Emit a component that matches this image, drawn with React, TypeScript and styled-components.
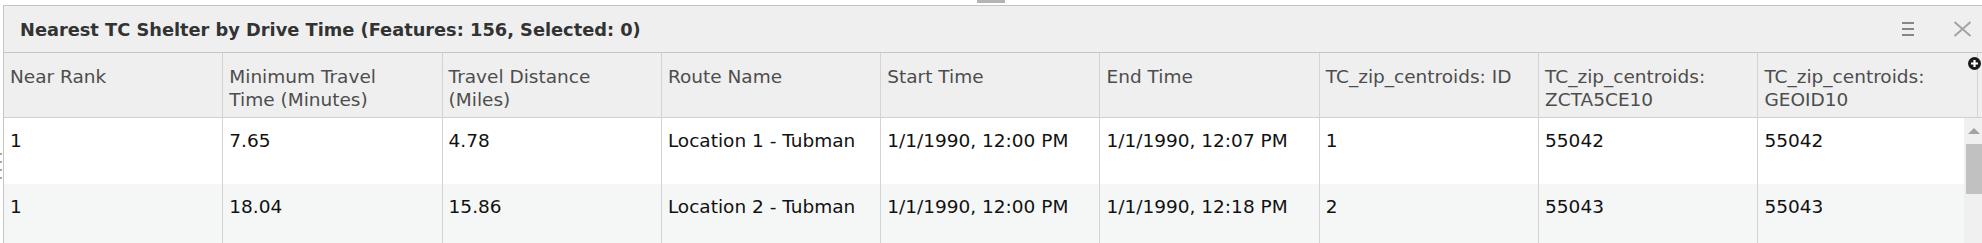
import React from 'react'
import styled, { createGlobalStyle } from 'styled-components'

const GlobalStyle = createGlobalStyle`
  html, body {
    margin: 0;
    padding: 0;
    background: #ffffff;
  }
  body {
    font-family: "DejaVu Sans", Verdana, sans-serif;
  }
`

const COL_W = 219.3

const columns = [
  'Near Rank',
  'Minimum Travel Time (Minutes)',
  'Travel Distance (Miles)',
  'Route Name',
  'Start Time',
  'End Time',
  'TC_zip_centroids: ID',
  'TC_zip_centroids: ZCTA5CE10',
  'TC_zip_centroids: GEOID10',
]

const rows = [
  ['1', '7.65', '4.78', 'Location 1 - Tubman', '1/1/1990, 12:00 PM', '1/1/1990, 12:07 PM', '1', '55042', '55042'],
  ['1', '18.04', '15.86', 'Location 2 - Tubman', '1/1/1990, 12:00 PM', '1/1/1990, 12:18 PM', '2', '55043', '55043'],
]

const MenuIcon = () => (
  <svg width="12" height="14" viewBox="0 0 12 14">
    <path d="M0 1h12M0 7h12M0 13h12" stroke="#666" strokeWidth="1.3" />
  </svg>
)

const CloseIcon = () => (
  <svg width="19" height="16" viewBox="0 0 19 16">
    <path d="M1.5 1L17.5 15M17.5 1L1.5 15" stroke="#a3a3a3" strokeWidth="2" />
  </svg>
)

const PlusIcon = () => (
  <svg width="13" height="13" viewBox="0 0 13 13">
    <circle cx="6.5" cy="6.5" r="6.5" fill="#1a1a1a" />
    <path d="M6.5 3v7M3 6.5h7" stroke="#fff" strokeWidth="2.2" />
  </svg>
)

const App = () => {
  return (
    <Page>
      <GlobalStyle />
      <TopStrip>
        <Handle />
      </TopStrip>
      <Panel>
        <TitleBar>
          <Title>Nearest TC Shelter by Drive Time (Features: 156, Selected: 0)</Title>
          <TitleTools>
            <ToolButton><MenuIcon /></ToolButton>
            <ToolButton><CloseIcon /></ToolButton>
          </TitleTools>
        </TitleBar>
        <HeaderRow>
          {columns.map((c, i) => (
            <HeaderCell key={i}>{c}</HeaderCell>
          ))}
        </HeaderRow>
        <Body>
          <Rows>
            {rows.map((r, ri) => (
              <Row key={ri} $odd={ri % 2 === 1}>
                {r.map((v, ci) => (
                  <Cell key={ci}>{v}</Cell>
                ))}
              </Row>
            ))}
          </Rows>
          <Scrollbar>
            <ArrowUp />
            <Thumb />
          </Scrollbar>
        </Body>
        <AddColumn><PlusIcon /></AddColumn>
      </Panel>
      <Grip>
        <Dot /><Dot /><Dot /><Dot />
      </Grip>
    </Page>
  )
}

const Page = styled.div`
  position: relative;
  width: 1982px;
  height: 243px;
  overflow: hidden;
  background: #ffffff;
`

const TopStrip = styled.div`
  height: 5px;
  display: flex;
  justify-content: center;
`

const Handle = styled.div`
  width: 28px;
  height: 3px;
  background: #b4b4b4;
`

const Panel = styled.div`
  position: relative;
  margin-left: 3px;
  border-top: 1px solid #c4c4c4;
  border-left: 1px solid #c4c4c4;
`

const TitleBar = styled.div`
  height: 46px;
  display: flex;
  align-items: center;
  justify-content: space-between;
  background: #efefef;
  border-bottom: 1px solid #c6c6c6;
  padding-left: 16px;
`

const Title = styled.div`
  font-size: 17.8px;
  font-weight: bold;
  color: #333333;
`

const TitleTools = styled.div`
  display: flex;
  align-items: center;
  gap: 39px;
  padding-right: 10px;
`

const ToolButton = styled.span`
  display: flex;
  align-items: center;
  cursor: pointer;
`

const HeaderRow = styled.div`
  display: flex;
  height: 64px;
  background: #efefef;
  border-bottom: 1px solid #d0d0d0;
  overflow: hidden;
`

const HeaderCell = styled.div`
  flex: none;
  box-sizing: border-box;
  width: ${COL_W}px;
  padding: 12px 18px 0 6px;
  border-right: 1px solid #d3d3d3;
  font-size: 18.5px;
  line-height: 23px;
  color: #4d4d4d;
`

const Body = styled.div`
  display: flex;
  height: 130px;
`

const Rows = styled.div`
  flex: 1;
  overflow: hidden;
`

const Row = styled.div<{ $odd: boolean }>`
  display: flex;
  height: 66px;
  background: ${({ $odd }) => ($odd ? '#f5f7f7' : '#ffffff')};
`

const Cell = styled.div`
  flex: none;
  box-sizing: border-box;
  width: ${COL_W}px;
  padding: 11px 6px 0;
  border-right: 1px solid #d3d3d3;
  font-size: 18.5px;
  line-height: 23px;
  color: #111111;
  white-space: nowrap;
`

const Scrollbar = styled.div`
  flex: none;
  width: 18px;
  background: #f0f0f0;
  display: flex;
  flex-direction: column;
  align-items: flex-end;
`

const ArrowUp = styled.div`
  margin-top: 10px;
  margin-right: 2px;
  width: 0;
  height: 0;
  border-left: 6px solid transparent;
  border-right: 6px solid transparent;
  border-bottom: 6px solid #a3a3a3;
`

const Thumb = styled.div`
  margin-top: 10px;
  width: 16px;
  height: 50px;
  background: #c1c1c1;
`

const AddColumn = styled.div`
  position: absolute;
  top: 51px;
  right: 1px;
  display: flex;
`

const Grip = styled.div`
  position: absolute;
  left: 0;
  top: 153px;
  display: flex;
  flex-direction: column;
  gap: 6px;
`

const Dot = styled.div`
  width: 2px;
  height: 2px;
  background: #a8a8a8;
`

export default App
